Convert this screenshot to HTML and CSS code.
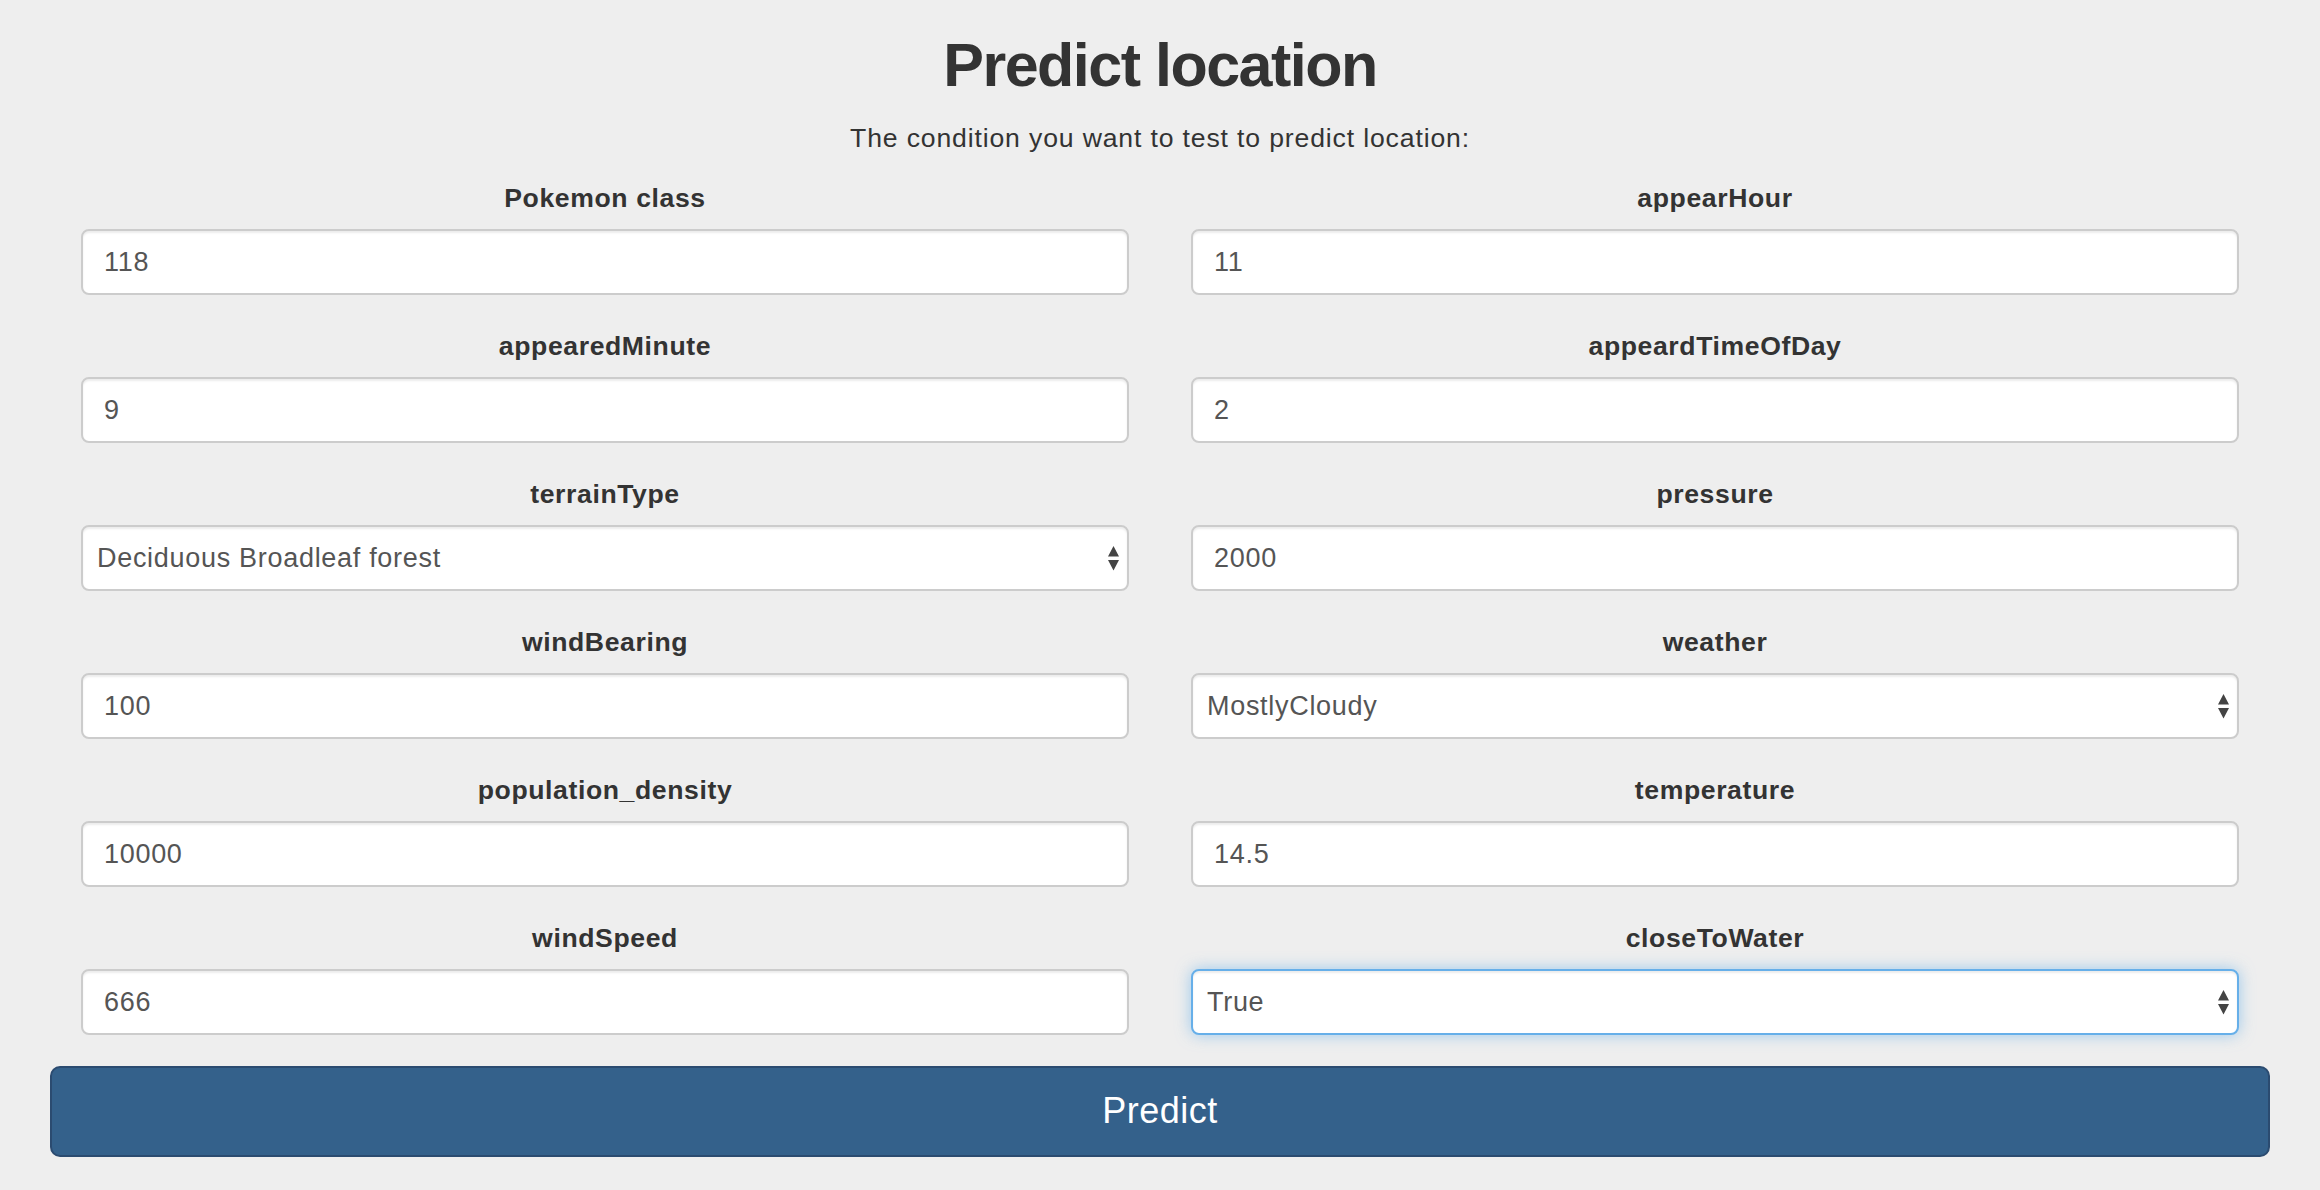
FILE: index.html
```html
<!DOCTYPE html>
<html lang="en">
<head>
<meta charset="utf-8">
<title>Predict location</title>
<link rel="stylesheet" href="styles.css">
</head>
<body>
<div class="page">
  <h1 class="title">Predict location</h1>
  <p class="subtitle">The condition you want to test to predict location:</p>
  <form class="grid">
    <div class="field">
      <label class="label">Pokemon class</label>
      <input class="control" type="text" value="118">
    </div>
    <div class="field">
      <label class="label">appearHour</label>
      <input class="control" type="text" value="11">
    </div>
    <div class="field">
      <label class="label">appearedMinute</label>
      <input class="control" type="text" value="9">
    </div>
    <div class="field">
      <label class="label">appeardTimeOfDay</label>
      <input class="control" type="text" value="2">
    </div>
    <div class="field">
      <label class="label">terrainType</label>
      <div class="select-wrap">
        <select class="control select"><option>Deciduous Broadleaf forest</option></select>
        <svg class="arrows" width="11" height="25" viewBox="0 0 11 25"><path d="M5.5 0 L11 10.5 L0 10.5 Z M0 14 L11 14 L5.5 24.5 Z" fill="#444"/></svg>
      </div>
    </div>
    <div class="field">
      <label class="label">pressure</label>
      <input class="control" type="text" value="2000">
    </div>
    <div class="field">
      <label class="label">windBearing</label>
      <input class="control" type="text" value="100">
    </div>
    <div class="field">
      <label class="label">weather</label>
      <div class="select-wrap">
        <select class="control select"><option>MostlyCloudy</option></select>
        <svg class="arrows" width="11" height="25" viewBox="0 0 11 25"><path d="M5.5 0 L11 10.5 L0 10.5 Z M0 14 L11 14 L5.5 24.5 Z" fill="#444"/></svg>
      </div>
    </div>
    <div class="field">
      <label class="label">population_density</label>
      <input class="control" type="text" value="10000">
    </div>
    <div class="field">
      <label class="label">temperature</label>
      <input class="control" type="text" value="14.5">
    </div>
    <div class="field">
      <label class="label">windSpeed</label>
      <input class="control" type="text" value="666">
    </div>
    <div class="field">
      <label class="label">closeToWater</label>
      <div class="select-wrap">
        <select class="control select focused"><option>True</option></select>
        <svg class="arrows" width="11" height="25" viewBox="0 0 11 25"><path d="M5.5 0 L11 10.5 L0 10.5 Z M0 14 L11 14 L5.5 24.5 Z" fill="#444"/></svg>
      </div>
    </div>
  </form>
  <button class="predict" type="button">Predict</button>
</div>
</body>
</html>
```
FILE: styles.css
```css
* { box-sizing: border-box; }
html, body {
  margin: 0;
  padding: 0;
  background: #eeeeee;
}
body {
  font-family: "Liberation Sans", Arial, Helvetica, sans-serif;
  color: #333333;
}
.page {
  padding: 30px 50px 0 50px;
}
.title {
  margin: 0;
  text-align: center;
  font-size: 61px;
  line-height: 70px;
  font-weight: 700;
  letter-spacing: -1.5px;
  color: #333333;
}
.subtitle {
  margin: 19px 0 0;
  text-align: center;
  font-size: 26.6px;
  line-height: 38px;
  letter-spacing: 0.85px;
}
.grid {
  margin: 22px 0 0;
  padding: 0 31px;
  display: grid;
  grid-template-columns: 1fr 1fr;
  column-gap: 62px;
  row-gap: 32px;
}
.field {
  display: flex;
  flex-direction: column;
}
.label {
  display: block;
  text-align: center;
  font-weight: 700;
  font-size: 26.6px;
  line-height: 38px;
  letter-spacing: 0.6px;
  margin-bottom: 12px;
}
.control {
  display: block;
  width: 100%;
  height: 66px;
  margin: 0;
  padding: 0 20px 0 21px;
  font-family: "Liberation Sans", Arial, Helvetica, sans-serif;
  font-size: 27px;
  letter-spacing: 0.7px;
  color: #555555;
  background: #ffffff;
  border: 2px solid #cccccc;
  border-radius: 8px;
  box-shadow: inset 0 2px 2px rgba(0, 0, 0, 0.075);
  outline: none;
}
.select-wrap {
  position: relative;
}
.select {
  -webkit-appearance: none;
  appearance: none;
  padding: 0 40px 0 14px;
}
.focused {
  border-color: #66afe9;
  box-shadow: inset 0 2px 2px rgba(0, 0, 0, 0.075), 0 0 15px rgba(102, 175, 233, 0.6);
}
.arrows {
  position: absolute;
  right: 10px;
  top: 21px;
  pointer-events: none;
}
.predict {
  display: block;
  width: 100%;
  height: 91px;
  margin: 31px 0 0;
  padding: 0 0 2px;
  font-family: "Liberation Sans", Arial, Helvetica, sans-serif;
  font-size: 36px;
  letter-spacing: 0.5px;
  color: #ffffff;
  background: #34618b;
  border: 2px solid #2b4b70;
  border-radius: 10px;
}
```
